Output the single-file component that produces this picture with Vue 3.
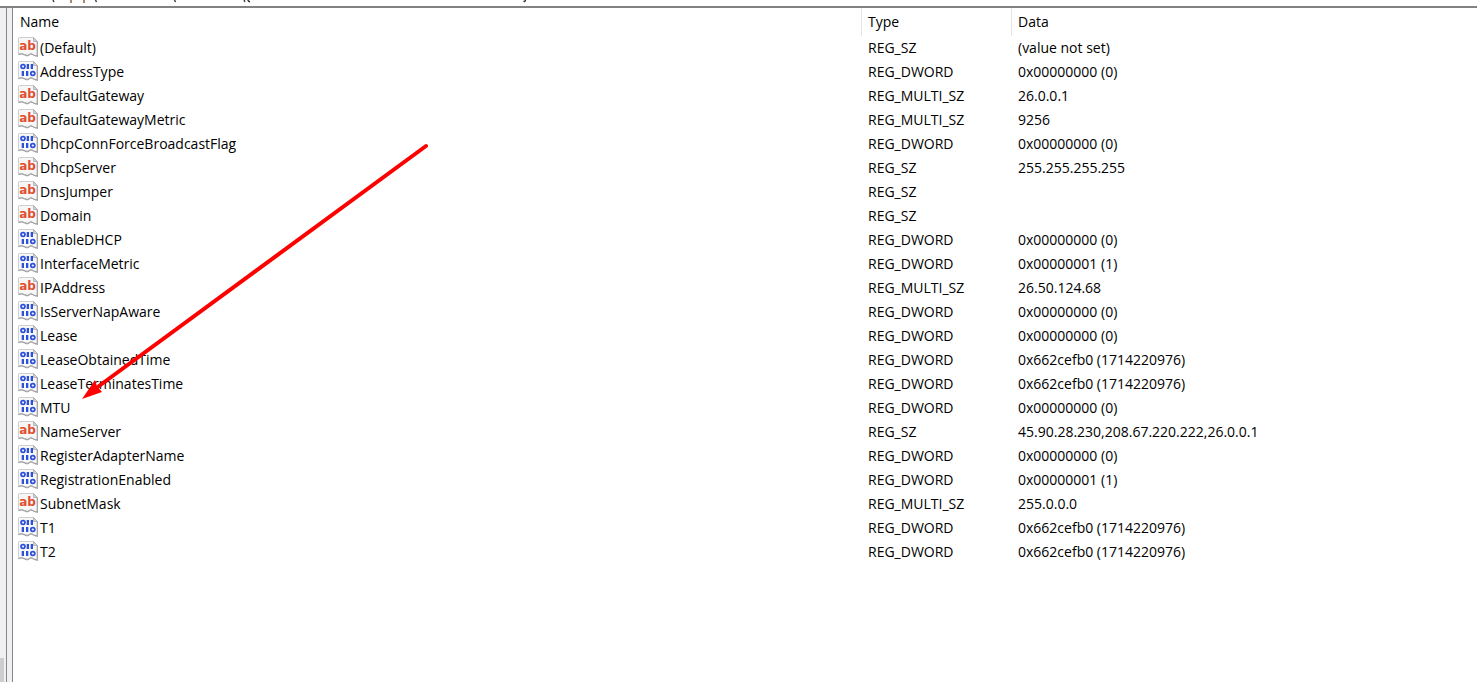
<script setup>
const zero = '0x00000000 (0)'
const one = '0x00000001 (1)'
const stamp = '0x662cefb0 (1714220976)'

const values = [
  ['(Default)', 'REG_SZ', '(value not set)'],
  ['AddressType', 'REG_DWORD', zero],
  ['DefaultGateway', 'REG_MULTI_SZ', '26.0.0.1'],
  ['DefaultGatewayMetric', 'REG_MULTI_SZ', '9256'],
  ['DhcpConnForceBroadcastFlag', 'REG_DWORD', zero],
  ['DhcpServer', 'REG_SZ', '255.255.255.255'],
  ['DnsJumper', 'REG_SZ', ''],
  ['Domain', 'REG_SZ', ''],
  ['EnableDHCP', 'REG_DWORD', zero],
  ['InterfaceMetric', 'REG_DWORD', one],
  ['IPAddress', 'REG_MULTI_SZ', '26.50.124.68'],
  ['IsServerNapAware', 'REG_DWORD', zero],
  ['Lease', 'REG_DWORD', zero],
  ['LeaseObtainedTime', 'REG_DWORD', stamp],
  ['LeaseTerminatesTime', 'REG_DWORD', stamp],
  ['MTU', 'REG_DWORD', zero],
  ['NameServer', 'REG_SZ', '45.90.28.230,208.67.220.222,26.0.0.1'],
  ['RegisterAdapterName', 'REG_DWORD', zero],
  ['RegistrationEnabled', 'REG_DWORD', one],
  ['SubnetMask', 'REG_MULTI_SZ', '255.0.0.0'],
  ['T1', 'REG_DWORD', stamp],
  ['T2', 'REG_DWORD', stamp],
].map(([name, type, data]) => ({ name, type, data }))
</script>

<template>
  <div class="editor">
    <header class="address">
      <svg class="edge" viewBox="0 0 540 6" aria-hidden="true">
        <path d="M53 0L54 2M95.500 0L96.500 2M174.500 0L175.500 2M244 0L245 2M248 0Q248 1.500 250 1.500M525.500 0Q525.500 1.500 523.500 1.500" fill="none" stroke="#2b2b2b" stroke-width="1.300" />
        <path d="M71 0V3M84 0V3" stroke="#8a5a20" stroke-width="1.400" />
      </svg>
    </header>
    <div class="panes">
      <aside class="tree"><div class="thumb"></div></aside>
      <div class="splitter"></div>
      <main class="list">
        <table>
          <colgroup>
            <col class="col-name" />
            <col class="col-type" />
            <col />
          </colgroup>
          <thead>
            <tr>
              <th scope="col"><div>Name</div></th>
              <th scope="col"><div>Type</div></th>
              <th scope="col"><div>Data</div></th>
            </tr>
          </thead>
          <tbody>
            <tr v-for="v in values" :key="v.name">
              <td>
                <div class="name">
                  <svg class="icon" viewBox="0 0 20 20" aria-hidden="true">
                    <path d="M1 .5H15.500L19.500 4.500V19L16.500 18.500L13 16.500L9.500 18.500L6 17.500L3.500 16.500L.5 17.500V1Z" fill="#f7f7f8" stroke="#cfcfd1" />
                    <path d="M19.300 4.500V19.200L16.500 18.500L13 16.700L9.500 18.700L6 17.700L3.500 16.700L.5 17.700" fill="none" stroke="#a4a4a6" stroke-width="1.300" />
                    <path d="M15.500 .5V4.500H19.500Z" fill="#d5d5d7" stroke="#a8a8aa" stroke-width=".8" />
                    <g v-if="v.type === 'REG_DWORD'">
                      <g fill="none" stroke="#2d50dc" stroke-width="1.700">
                        <ellipse cx="5" cy="5.500" rx="2" ry="1.800" />
                        <ellipse cx="14.800" cy="12.500" rx="2" ry="1.800" />
                      </g>
                      <g fill="#2d50dc">
                        <rect x="9" y="3" width="2" height="5" />
                        <rect x="13" y="3" width="2" height="5" />
                        <rect x="4" y="10" width="2" height="5" />
                        <rect x="8" y="10" width="2" height="5" />
                      </g>
                      <g fill="#2d50dc" opacity=".3">
                        <rect x="8" y="3" width="1" height="5" />
                        <rect x="12" y="3" width="1" height="5" />
                        <rect x="3" y="10" width="1" height="5" />
                        <rect x="10" y="10" width="1" height="5" />
                      </g>
                    </g>
                    <text v-else x="9.500" y="13" text-anchor="middle">ab</text>
                  </svg>
                  <span>{{ v.name }}</span>
                </div>
              </td>
              <td>{{ v.type }}</td>
              <td>{{ v.data }}</td>
            </tr>
          </tbody>
        </table>
        <svg class="arrow" viewBox="0 0 350 260" aria-hidden="true">
          <path d="M345 6L18 246" fill="none" stroke="#fe0000" stroke-width="4" stroke-linecap="round" />
          <path d="M1 259L14 240L16 246L21 252Z" fill="#fe0000" />
        </svg>
      </main>
    </div>
  </div>
</template>

<style>
body {
  margin: 0;
  background: #fff;
}
</style>

<style scoped>
.editor {
  display: flex;
  flex-direction: column;
  min-height: 100vh;
  color: #000;
  font: 14px/24px "Open Sans", "Noto Sans", sans-serif;
}
.address {
  height: 6px;
  border-bottom: 2px solid #828282;
}
.edge {
  display: block;
  width: 540px;
  height: 6px;
}
.panes {
  display: flex;
  flex: 1;
}
.tree {
  display: flex;
  align-items: flex-end;
  box-sizing: border-box;
  width: 7px;
  background: #f0f0f0;
  border-right: 1px solid #828790;
}
.thumb {
  width: 4px;
  height: 24px;
  background: #cdcdcd;
}
.splitter {
  width: 5px;
  background: #f0f0f0;
}
.list {
  position: relative;
  flex: 1;
  border-left: 1px solid #828790;
}
table {
  width: 100%;
  table-layout: fixed;
  border-collapse: collapse;
}
.col-name {
  width: 849px;
}
.col-type {
  width: 150px;
}
th,
td {
  height: 24px;
  padding: 0 0 0 6px;
  text-align: left;
  font-weight: 400;
  white-space: nowrap;
}
th {
  height: 28px;
  padding: 0;
}
th div {
  height: 28px;
  padding-left: 6px;
  border-right: 1px solid #e5e5e5;
  line-height: 28px;
}
th:first-child div {
  padding-left: 7px;
}
th:last-child div {
  border-right: 0;
}
td:first-child {
  padding-left: 5px;
}
.name {
  display: flex;
  align-items: flex-start;
  gap: 2px;
}
.icon {
  width: 20px;
  height: 20px;
  margin-top: 1px;
}
.icon text {
  fill: #e0502e;
  font: bold 12px "DejaVu Sans", sans-serif;
}
.arrow {
  position: absolute;
  top: 132px;
  left: 68px;
  width: 350px;
  height: 260px;
  pointer-events: none;
}
</style>
